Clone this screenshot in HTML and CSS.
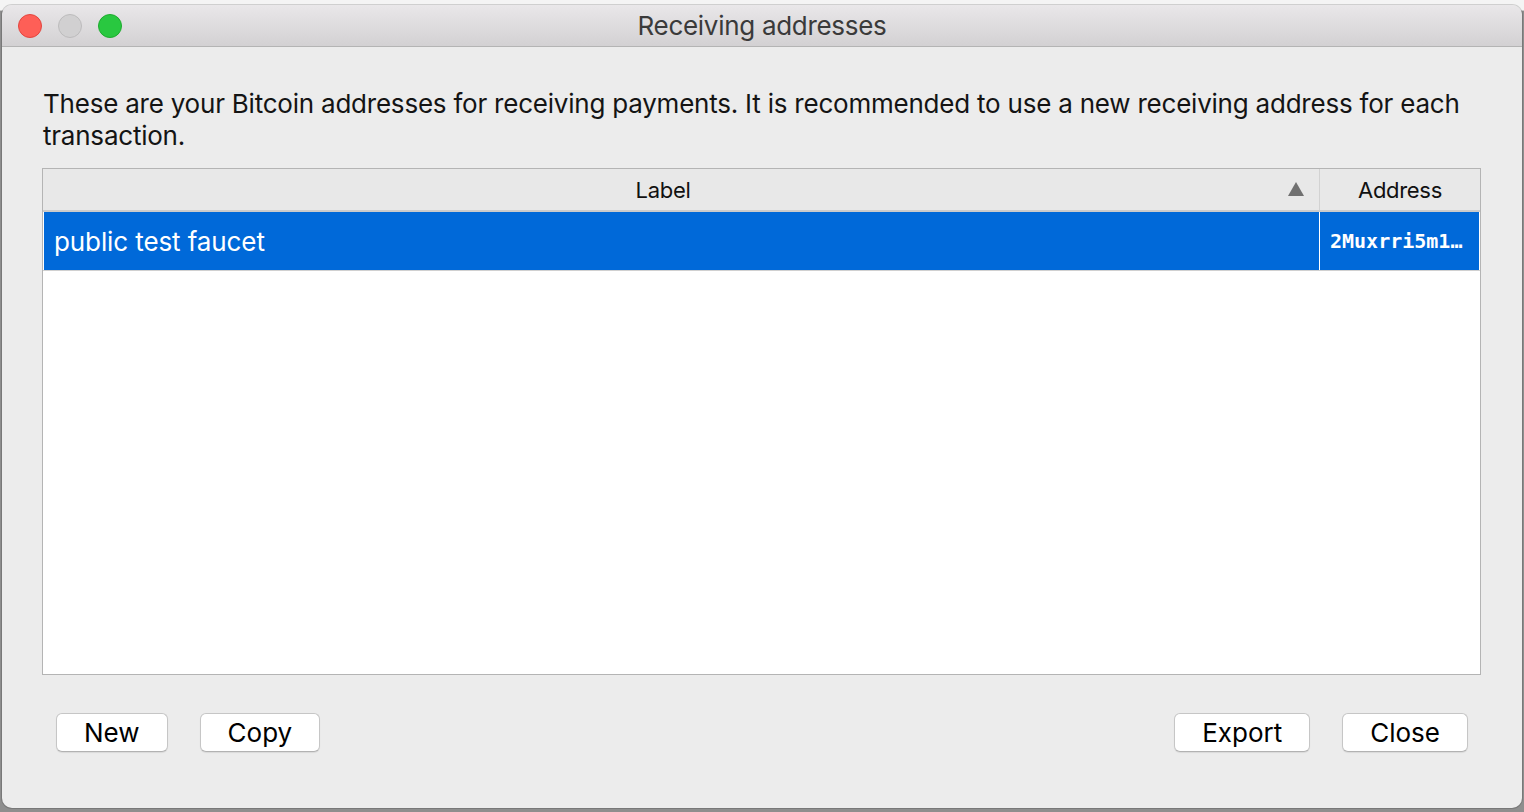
FILE: index.html
```html
<!DOCTYPE html>
<html lang="en">
<head>
<meta charset="utf-8">
<title>Receiving addresses</title>
<link rel="stylesheet" href="styles.css">
</head>
<body>
<div class="backdrop-top"></div>
<div class="window">
  <div class="titlebar">
    <div class="lights">
      <span class="light red"></span>
      <span class="light gray"></span>
      <span class="light green"></span>
    </div>
    <div class="title">Receiving addresses</div>
    <div class="titlebar-spacer"></div>
  </div>
  <div class="content">
    <p class="intro">These are your Bitcoin addresses for receiving payments. It is recommended to use a new receiving address for each<br>transaction.</p>
    <div class="table">
      <div class="thead">
        <div class="th th-label">
          <span>Label</span>
          <svg class="sort" width="16" height="14" viewBox="0 0 16 14"><polygon points="8,0 16,14 0,14" fill="#707070"/></svg>
        </div>
        <div class="th th-addr">Address</div>
      </div>
      <div class="tr selected">
        <div class="td td-label">public test faucet</div>
        <div class="td td-addr">2Muxrri5m1…</div>
      </div>
      <div class="tbody-empty"></div>
    </div>
    <div class="buttons">
      <button class="btn">New</button>
      <button class="btn">Copy</button>
      <div class="spacer"></div>
      <button class="btn">Export</button>
      <button class="btn">Close</button>
    </div>
  </div>
</div>
</body>
</html>
```

FILE: styles.css
```css
html, body {
  margin: 0;
  padding: 0;
}
body {
  width: 1524px;
  height: 812px;
  overflow: hidden;
  background: #8e8e8e;
  font-family: "Inter", "Liberation Sans", sans-serif;
  letter-spacing: -0.3px;
  position: relative;
}
.backdrop-top {
  position: absolute;
  left: 0;
  top: 0;
  width: 1524px;
  height: 10px;
  background: #f4f4f4;
  border-bottom: 1px solid #c9c9c9;
}
.window {
  position: relative;
  margin: 5px 0 0 2px;
  width: 1520px;
  height: 803px;
  background: #ececec;
  border-radius: 10px;
  overflow: hidden;
  box-shadow: 0 0 0 1px rgba(0,0,0,0.15);
  display: flex;
  flex-direction: column;
}
.titlebar {
  height: 41px;
  border-bottom: 1px solid #b4b4b4;
  background: linear-gradient(to bottom, #e9e7e9, #d3d1d3);
  display: grid;
  grid-template-columns: 1fr auto 1fr;
  align-items: center;
}
.lights {
  display: flex;
  gap: 16px;
  padding-left: 16px;
}
.light {
  width: 24px;
  height: 24px;
  border-radius: 50%;
  box-sizing: border-box;
}
.light.red { background: #fe5f57; border: 1px solid #e2463f; }
.light.gray { background: #d1d0d1; border: 1px solid #bcbbbc; }
.light.green { background: #29c840; border: 1px solid #1eab2e; }
.title {
  font-size: 26px;
  color: #3a3a3a;
  text-align: center;
}
.content {
  flex: 1;
  display: flex;
  flex-direction: column;
  padding: 0 41px 0 40px;
}
.intro {
  margin: 41px 0 0 1px;
  font-size: 26px;
  line-height: 32px;
  letter-spacing: -0.22px;
  color: #141414;
  white-space: nowrap;
}
.table {
  margin-top: 16px;
  height: 507px;
  box-sizing: border-box;
  border: 1px solid #b4b4b4;
  background: #fff;
  display: flex;
  flex-direction: column;
}
.thead {
  display: flex;
  height: 41px;
  background: #e8e8e8;
  border-bottom: 2px solid #cbcbcb;
}
.th {
  font-size: 22px;
  color: #111;
  display: flex;
  align-items: center;
  justify-content: center;
}
.th-label {
  flex: 1;
  position: relative;
  padding-right: 36px;
  border-right: 1px solid #d2d2d2;
}
.sort {
  position: absolute;
  right: 15px;
  top: 13px;
}
.th-addr {
  width: 160px;
}
.tr {
  display: flex;
  height: 58px;
  border-bottom: 1px solid #d0d0d0;
  padding: 0 1px;
}
.tr.selected .td {
  background: #0069d9;
  color: #fff;
}
.td {
  display: flex;
  align-items: center;
  padding-left: 10px;
}
.td-label {
  flex: 1;
  font-size: 26px;
  letter-spacing: -0.1px;
  border-right: 1px solid #fff;
}
.td-addr {
  width: 149px;
  font-family: "DejaVu Sans Mono", "Liberation Mono", monospace;
  font-size: 20px;
  font-weight: bold;
  letter-spacing: 0;
}
.tbody-empty {
  flex: 1;
}
.buttons {
  display: flex;
  align-items: center;
  gap: 32px;
  margin-top: 38px;
  padding: 0 13px 0 14px;
}
.spacer {
  flex: 1;
}
.btn {
  height: 39px;
  padding: 0 27px;
  font-family: inherit;
  font-size: 26px;
  letter-spacing: 0;
  color: #000;
  background: #fff;
  border: 1px solid #c6c6c6;
  border-bottom-color: #b2b2b2;
  border-radius: 6px;
  box-shadow: 0 1px 1px rgba(0,0,0,0.08);
  line-height: 1;
}
```
